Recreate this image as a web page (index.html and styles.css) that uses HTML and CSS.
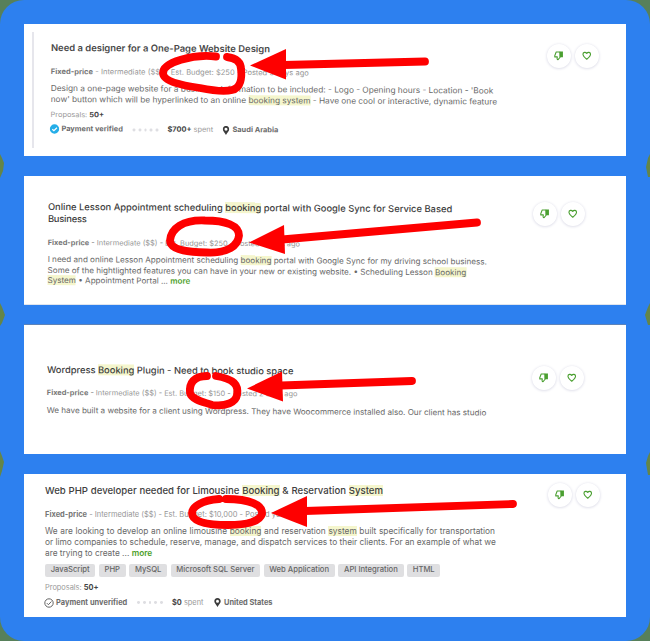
FILE: index.html
```
<!DOCTYPE html>
<html lang="en">
<head>
<meta charset="utf-8">
<title>Job listings</title>
<link rel="stylesheet" href="styles.css">
</head>
<body>
<svg class="defs" width="0" height="0" aria-hidden="true">
  <symbol id="dislike" viewBox="0 0 10 10"><path d="M6.2 1H2.300L.8 5v1.200h2.700L3.200 8.400l.9.900 2.300-2.700z" fill="none" stroke="currentColor" stroke-width="1.100" stroke-linejoin="round"/><path d="M6 .6h3.400v6H6z" fill="currentColor"/></symbol>
  <symbol id="heart" viewBox="0 0 10 10"><path d="M5 8.700C2.800 6.900 1 5.400 1 3.500 1 1.200 3.800.7 5 2.600 6.200.7 9 1.200 9 3.500 9 5.400 7.200 6.900 5 8.700z" fill="none" stroke="currentColor" stroke-width="1.150" stroke-linejoin="round"/></symbol>
  <symbol id="pin" viewBox="0 0 7 9"><path d="M3.500 0C1.500 0 .3 1.400.3 3.200.3 5.200 2.500 6.600 3.500 9c1-2.400 3.200-3.800 3.200-5.800C6.700 1.400 5.500 0 3.500 0zm0 1.700a1.500 1.500 0 1 1 0 3 1.500 1.500 0 0 1 0-3z" fill="currentColor" fill-rule="evenodd"/></symbol>
</svg>
<main class="board">
  <article class="card card-1">
    <div class="job tilt">
      <h2 class="title w219">Need a designer for a One-Page Website Design</h2>
      <p class="meta w258"><b>Fixed-price</b> - Intermediate ($$) - Est. Budget: $250 - Posted 5 days ago</p>
      <div class="desc">
        <p class="w445 short">Design a one-page website for a business. Information to be included: - Logo - Opening hours - Location - 'Book</p>
        <p class="w445">now' button which will be hyperlinked to an online <mark>booking system</mark> - Have one cool or interactive, dynamic feature</p>
      </div>
      <p class="proposals">Proposals: <b>50+</b></p>
      <div class="client">
        <svg class="badge" viewBox="0 0 10 10"><circle cx="5" cy="5" r="4.700" fill="#25aee8"/><path d="M2.800 5.200l1.600 1.500 3-3" fill="none" stroke="#fff" stroke-width="1.200"/></svg>
        <b class="pay">Payment verified</b>
        <span class="stars"><i></i><i></i><i></i><i></i><i></i></span>
        <span class="spent"><b>$700+</b> spent</span>
        <svg class="pin"><use href="#pin"/></svg>
        <b>Saudi Arabia</b>
      </div>
    </div>
    <div class="actions"><button><svg><use href="#dislike"/></svg></button><button><svg><use href="#heart"/></svg></button></div>
  </article>

  <article class="card card-2">
    <div class="job tilt">
      <h2 class="title w404">Online Lesson Appointment scheduling <mark>booking</mark> portal with Google Sync for Service Based</h2>
      <h2 class="title">Business</h2>
      <p class="meta w252"><b>Fixed-price</b> - Intermediate ($$) - Est. Budget: $250 - Posted 6 days ago</p>
      <div class="desc">
        <p class="w438">I need and online Lesson Appointment scheduling <mark>booking</mark> portal with Google Sync for my driving school business.</p>
        <p class="w416">Some of the hightlighted features you can have in your new or existing website. • Scheduling Lesson <mark>Booking</mark></p>
        <p class="w142"><mark>System</mark> • Appointment Portal ... <a>more</a></p>
      </div>
    </div>
    <div class="actions"><button><svg><use href="#dislike"/></svg></button><button><svg><use href="#heart"/></svg></button></div>
  </article>

  <article class="card card-3">
    <div class="job tilt">
      <h2 class="title w246">Wordpress <mark>Booking</mark> Plugin - Need to book studio space</h2>
      <p class="meta w250"><b>Fixed-price</b> - Intermediate ($$) - Est. Budget: $150 - Posted 2 days ago</p>
      <div class="desc">
        <p class="w438">We have built a website for a client using Wordpress. They have Woocommerce installed also. Our client has studio</p>
      </div>
    </div>
    <div class="actions"><button><svg><use href="#dislike"/></svg></button><button><svg><use href="#heart"/></svg></button></div>
  </article>

  <article class="card card-4">
    <div class="job">
      <h2 class="title w338">Web PHP developer needed for Limousine <mark>Booking</mark> &amp; Reservation <mark>System</mark></h2>
      <p class="meta"><b>Fixed-price</b> - Intermediate ($$) - Est. Budget: $10,000 - Posted yesterday</p>
      <div class="desc">
        <p class="w450">We are looking to develop an online limousine <mark>booking</mark> and reservation <mark>system</mark> built specifically for transportation</p>
        <p class="w450">or limo companies to schedule, reserve, manage, and dispatch services to their clients. For an example of what we</p>
        <p class="w107">are trying to create ... <a>more</a></p>
      </div>
      <div class="tags"><span>JavaScript</span><span>PHP</span><span>MySQL</span><span>Microsoft SQL Server</span><span>Web Application</span><span>API Integration</span><span>HTML</span></div>
      <p class="proposals">Proposals: <b>50+</b></p>
      <div class="client">
        <svg class="badge" viewBox="0 0 10 10"><path d="M5 .8a4.200 4.200 0 1 0 0 8.400 4.200 4.200 0 0 0 0-8.400zM2.800 5.100l1.600 1.600 3-3.200" fill="none" stroke="#555" stroke-width=".9"/></svg>
        <b class="pay">Payment unverified</b>
        <span class="stars"><i></i><i></i><i></i><i></i><i></i></span>
        <span class="spent"><b>$0</b> spent</span>
        <svg class="pin"><use href="#pin"/></svg>
        <b>United States</b>
      </div>
    </div>
    <div class="actions"><button><svg><use href="#dislike"/></svg></button><button><svg><use href="#heart"/></svg></button></div>
  </article>

  <svg class="marks" viewBox="0 0 650 641" aria-hidden="true">
    <g fill="#648548">
      <path d="M0 154l2 4 2 5-1 8-3 7zM0 303l2 4 3 8-3 8-2 3zM0 451l2 5 2 6-2 9-2 6z"/>
      <path d="M650 154l-2 4-2 9 2 10h2zM650 303l-2 4-3 8 3 10h2zM650 452l-2 4-2 7 2 12h2z"/>
    </g>
    <g class="ink">
      <path d="M216 56.500C193 54 163 62 163 73c0 9 23 13 37 15 15 3 24 4 32 2 9-2 10-13 9-21 0-6-4-11-14-12"/>
      <path d="M284 65L425 61.500"/>
      <path d="M205 220.500c-22-1-34 8-35 20 0 9 16 12 37 12 21 1 31-7 32-17 0-10-13-15-34-15z"/>
      <path d="M282 239.500L477 222.500"/>
      <path d="M207 376c-13 0-18 7-17 17 2 7 14 9 22 12 14 2 24-3 25-10 2-10-3-16-21-19"/>
      <path d="M281 385.500L412 381"/>
      <path d="M219 499c-17 1-27 8-27 14 0 9 15 12 36 12 20 0 32-4 34-11 1-9-12-15-36-15"/>
      <path d="M305 511L513 504"/>
    </g>
    <g fill="#fe0000">
      <path d="M250 65.500L286 49v30.500z"/><path d="M249 242.500L284 225l1 29z"/><path d="M247 388.500L282 371.500l1 30z"/><path d="M271 513L307 496v31z"/>
    </g>
  </svg>
</main>
</body>
</html>
```
FILE: styles.css
```
* { box-sizing: border-box; }
body { margin: 0; background: #57805a; font-family: Inter, "Liberation Sans", sans-serif; }
.defs { position: absolute; }
.board {
  position: relative;
  width: 650px;
  height: 641px;
  padding: 24px;
  display: flex;
  flex-direction: column;
  gap: 20px;
  border-radius: 24px;
  background: #2d80ef;
  overflow: hidden;
}
.card { display: flex; justify-content: space-between; background: #fff; --t: 9.35px; --m: 7.4px; --d: 8.1px; --lh: 10.4px; }
.card-1 { height: 132px; padding: 16.5px 27px 0 27px; --t: 9.42px; --m: 7.5px; --d: 8.3px; --lh: 10.5px;
  background: linear-gradient(#e6e6ec, #e6e6ec) 8px 8px / 2px 116px no-repeat #fff; }
.card-2 { height: 129px; padding: 25.4px 41px 0 24px; border-bottom: 1px solid #dfe5ee; }
.card-3 { height: 129px; padding: 37.5px 42px 0 23px; box-shadow: 0 -1px #5d83b8; }
.card-4 { height: 143px; padding: 9.5px 26px 0 21px; --t: 9.6px; --m: 7.5px; --d: 8.34px; --lh: 10.7px; }
.job { white-space: nowrap; }
.tilt { transform: rotate(.32deg); transform-origin: 0 0; }
p, h2 { margin: 0; text-align-last: justify; }
.title { font-size: var(--t); font-weight: 600; line-height: 14px; color: #484848; }
.card-2 .title, .card-3 .title, .card-4 .title { font-weight: 500; color: #404040; }
.card-2 .title { line-height: 12.2px; }
.title:not([class*=" w"]) { text-align-last: left; letter-spacing: -.2px; }
.meta { margin-top: 12px; font-size: var(--m); line-height: 10px; color: #969696; }
.card-2 .meta { margin-top: 12.8px; }
.card-3 .meta { margin-top: 11.4px; }
.card-4 .meta { text-align-last: left; }
.meta b { color: #777; font-weight: 700; }
.desc { margin-top: 6.2px; font-size: var(--d); line-height: var(--lh); color: #686868; }
.card-4 .desc { margin-top: 6.8px; }
.desc a { color: #4d9f2b; font-weight: 600; }
mark { background: #f5f6cd; color: inherit; }
.proposals, .client { font-size: 7.4px; line-height: 10px; color: #999; }
.proposals { margin-top: 5.5px; text-align-last: left; }
.proposals b, .spent b { color: #444; }
.client { display: flex; align-items: center; margin-top: 4.5px; color: #6c6c6c; }
.badge { width: 10px; height: 10px; margin: 0 2px 0 -1px; }
.pay { width: 71px; }
.card-4 .pay { width: 81px; letter-spacing: .05px; }
.stars { display: flex; gap: 3px; width: 35px; }
.stars i { width: 2.8px; height: 2.8px; border-radius: 50%; background: #dedee2; }
.spent { width: 55px; color: #999; }
.card-4 .spent { width: 42px; }
.pin { width: 7px; height: 9px; margin-right: 3px; color: #3c3c3c; }
.tags { display: flex; gap: 3.5px; margin: 5.8px 0 6.5px; }
.tags span { height: 12.5px; padding: 0 5.7px; border-radius: 2px; background: #dfdfe1; font-size: 7.65px; line-height: 12.5px; font-weight: 500; color: #666; }
.actions { display: flex; gap: 4px; height: 24px; }
.card-1 .actions { margin-top: 3.5px; }
.card-2 .actions { margin-top: .6px; }
.card-3 .actions { margin-top: 3.5px; }
.card-4 .actions { margin-top: -.5px; }
button { width: 24px; height: 24px; padding: 0; border: 0; border-radius: 50%; background: #fff; box-shadow: 0 .5px 3px #d3d3e2; display: grid; place-items: center; color: #4a9f30; }
button svg { width: 9.5px; height: 9.5px; }
.marks { position: absolute; top: 0; left: 0; width: 650px; height: 641px; }
.ink { fill: none; stroke: #fe0000; stroke-width: 7.8px; stroke-linecap: round; stroke-linejoin: round; }
.w107 { width: 107px; }
.w142 { width: 142px; }
.w219 { width: 219px; }
.w246 { width: 246px; }
.w250 { width: 250px; }
.w252 { width: 252px; }
.w258 { width: 258px; }
.w338 { width: 338px; }
.w404 { width: 404px; }
.w416 { width: 416px; }
.w438 { width: 438px; }
.w445 { width: 445px; }
.w445.short { width: 441px; }
.w450 { width: 450px; }
```
